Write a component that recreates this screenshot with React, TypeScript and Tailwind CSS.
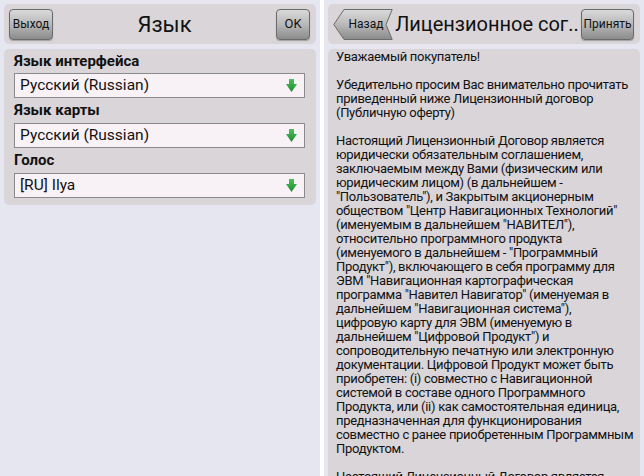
import React from "react";

const lines: string[] = [
  "Уважаемый покупатель!",
  "",
  "Убедительно просим Вас внимательно прочитать",
  "приведенный ниже Лицензионный договор",
  "(Публичную оферту)",
  "",
  "Настоящий Лицензионный Договор является",
  "юридически обязательным соглашением,",
  "заключаемым между Вами (физическим или",
  "юридическим лицом) (в дальнейшем -",
  "\"Пользователь\"), и Закрытым акционерным",
  "обществом \"Центр Навигационных Технологий\"",
  "(именуемым в дальнейшем \"НАВИТЕЛ\"),",
  "относительно программного продукта",
  "(именуемого в дальнейшем - \"Программный",
  "Продукт\"), включающего в себя программу для",
  "ЭВМ \"Навигационная картографическая",
  "программа \"Навител Навигатор\" (именуемая в",
  "дальнейшем \"Навигационная система\"),",
  "цифровую карту для ЭВМ (именуемую в",
  "дальнейшем \"Цифровой Продукт\") и",
  "сопроводительную печатную или электронную",
  "документации. Цифровой Продукт может быть",
  "приобретен: (i) совместно с Навигационной",
  "системой в составе одного Программного",
  "Продукта, или (ii) как самостоятельная единица,",
  "предназначенная для функционирования",
  "совместно с ранее приобретенным Программным",
  "Продуктом.",
  "",
  "Настоящий Лицензионный Договор является",
];

function GreenArrow() {
  return (
    <svg width="11" height="13" viewBox="0 0 11 13">
      <defs>
        <linearGradient id="ga" x1="0" y1="0" x2="0" y2="1">
          <stop offset="0" stopColor="#4cc05a" />
          <stop offset="1" stopColor="#1c8a2e" />
        </linearGradient>
      </defs>
      <path d="M3 0 H8 V5 H11 L5.5 13 L0 5 H3 Z" fill="url(#ga)" />
    </svg>
  );
}

function Btn({ children, w }: { children: React.ReactNode; w: string }) {
  return (
    <div
      className={`${w} h-[31px] rounded-[4px] border border-[#6a6a6a] bg-linear-to-b from-[#d9d9d9] via-[#b8b8b8] to-[#8c8c8c] flex items-center justify-center text-[12px] text-[#111] shadow-[0_1px_1px_rgba(0,0,0,0.25)]`}
    >
      {children}
    </div>
  );
}

function Select({ text }: { text: string }) {
  return (
    <div className="h-[25px] border border-[#8a8a8a] bg-[#f8f2f6] flex items-center justify-between pl-[5px] pr-[7px]">
      <span className="text-[15.5px] text-[#111] leading-none">{text}</span>
      <GreenArrow />
    </div>
  );
}

function BackButton() {
  return (
    <div className="relative w-[60px] h-[31px] flex items-center justify-center pl-[6px]">
      <svg className="absolute inset-0" width="60" height="31" viewBox="0 0 60 31">
        <defs>
          <linearGradient id="bb" x1="0" y1="0" x2="0" y2="1">
            <stop offset="0" stopColor="#dadada" />
            <stop offset="0.5" stopColor="#b9b9b9" />
            <stop offset="1" stopColor="#8a8a8a" />
          </linearGradient>
        </defs>
        <path
          d="M0.8 15.5 L11 0.5 H59.2 L53 15.5 L59.2 30.5 H11 Z"
          fill="url(#bb)"
          stroke="#6a6a6a"
          strokeWidth="1"
          strokeLinejoin="round"
        />
      </svg>
      <span className="relative text-[12px] text-[#111]">Назад</span>
    </div>
  );
}

export default function App() {
  return (
    <div className="w-[644px] h-[476px] flex bg-white overflow-hidden [font-family:Roboto,'Noto_Sans',sans-serif]">
      {/* Left panel */}
      <div className="w-[320px] h-full bg-[#e6e6f0] p-[4px] flex flex-col gap-[5px]">
        <div className="h-[40px] rounded-[5px] bg-[#d9d5d9] flex items-center pl-[5px] pr-[6px]">
          <Btn w="w-[44px]">Выход</Btn>
          <div className="flex-1 text-center text-[22px] text-[#111]">Язык</div>
          <Btn w="w-[34px]">
            <span className="text-[13px]">OK</span>
          </Btn>
        </div>
        <div className="rounded-[5px] bg-[#d9d5d9] pl-[10px] pr-[11px] pb-[7px]">
          <div className="h-[24px] flex items-center text-[15px] font-bold text-[#111]">
            Язык интерфейса
          </div>
          <Select text="Русский (Russian)" />
          <div className="h-[25px] flex items-center text-[15px] font-bold text-[#111]">
            Язык карты
          </div>
          <Select text="Русский (Russian)" />
          <div className="h-[25px] flex items-center text-[15px] font-bold text-[#111]">
            Голос
          </div>
          <Select text="[RU] Ilya" />
        </div>
      </div>

      {/* Divider */}
      <div className="w-[4px] h-full bg-white" />

      {/* Right panel */}
      <div className="w-[320px] h-full bg-[#e6e6f0] pt-[4px] px-[4px] flex flex-col gap-[5px] overflow-hidden">
        <div className="h-[40px] shrink-0 rounded-[5px] bg-[#d9d5d9] flex items-center pl-[5px] pr-[6px]">
          <BackButton />
          <div className="flex-1 text-center text-[20px] text-[#111] whitespace-nowrap">
            Лицензионное сог..
          </div>
          <Btn w="w-[53px]">Принять</Btn>
        </div>
        <div className="flex-1 rounded-t-[5px] bg-[#d9d5d9] pl-[8px] pt-[1px] overflow-hidden">
          {lines.map((l, i) => (
            <div
              key={i}
              className="h-[14px] leading-[14px] text-[13px] tracking-[-0.3px] text-[#111] whitespace-nowrap"
            >
              {l}
            </div>
          ))}
        </div>
      </div>
    </div>
  );
}
